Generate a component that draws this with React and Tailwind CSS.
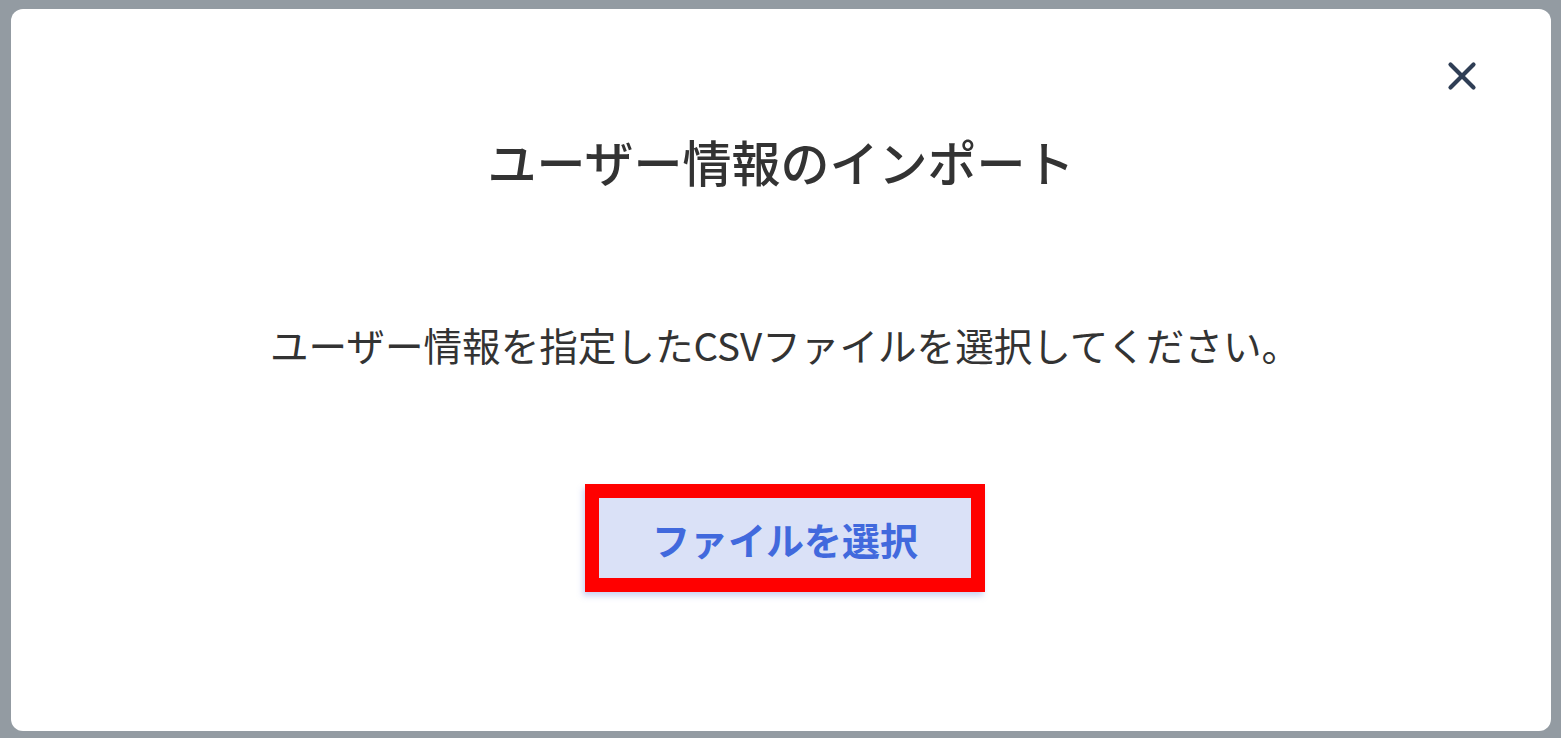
import { X } from "lucide-react";

export default function App() {
  return (
    <div className="h-[738px] w-full bg-[#939ba2] pl-[11px] pr-[10px] pt-[9px] pb-[7px] font-['Noto_Sans_CJK_JP',sans-serif]">
      <div className="relative flex h-full flex-col items-center rounded-[12px] bg-white">
        <button className="absolute right-[66px] top-[44px] text-[#2f3e55]">
          <X size={46} strokeWidth={2.2} />
        </button>

        <h1 className="mt-[122px] text-[49px] font-medium leading-[60px] text-[#333333]">
          ユーザー情報のインポート
        </h1>

        <p className="mt-[128px] ml-[8px] text-[38.6px] leading-[50px] text-[#333333]">
          ユーザー情報を指定したCSVファイルを選択してください。
        </p>

        <button className="mt-[115px] ml-[8px] flex h-[108px] w-[400px] items-center justify-center border-[14px] border-[#ff0000] bg-[#dae1f7] text-[38px] font-bold text-[#4169dd] shadow-[-2px_4px_6px_rgba(100,130,220,0.35)]">
          ファイルを選択
        </button>
      </div>
    </div>
  );
}
